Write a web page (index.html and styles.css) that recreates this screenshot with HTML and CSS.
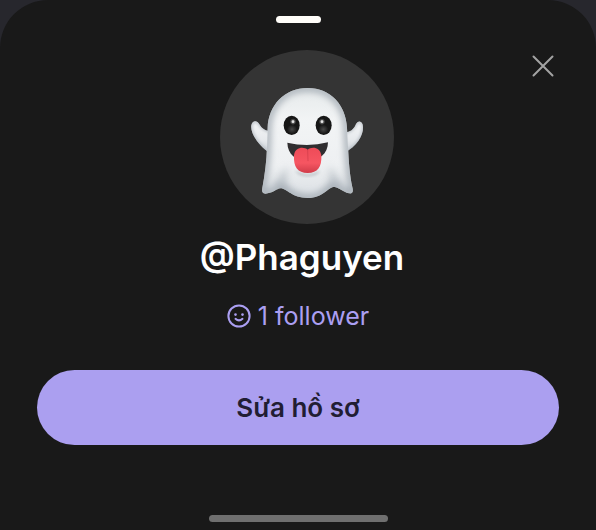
FILE: index.html
```html
<!DOCTYPE html>
<html lang="vi">
<head>
    <meta charset="UTF-8">
    <meta name="viewport" content="width=device-width, initial-scale=1">
    <title>Phaguyen</title>
    <link rel="stylesheet" href="styles.css">
</head>
<body>
    <main class="sheet">
        <div class="handle"></div>
        <button class="close" type="button" aria-label="Close">
            <svg viewBox="0 0 24 24" width="24" height="24">
                <path d="M2.5 2.5 21.5 21.5M21.5 2.5 2.5 21.5" />
            </svg>
        </button>

        <div class="avatar">
            <svg viewBox="15 15 522 522" role="img" aria-label="Ghost">
                <defs>
                    <linearGradient id="bodyFill" x1="0" y1="0" x2="0" y2="1">
                        <stop offset="0" stop-color="#e6eaeb" />
                        <stop offset="0.3" stop-color="#f2f4f5" />
                        <stop offset="0.7" stop-color="#eef0f2" />
                        <stop offset="1" stop-color="#dadfe3" />
                    </linearGradient>
                    <linearGradient id="armFill" x1="0" y1="0" x2="0" y2="1">
                        <stop offset="0" stop-color="#f5f6f7" />
                        <stop offset="0.6" stop-color="#e6e9ec" />
                        <stop offset="1" stop-color="#c9cfd5" />
                    </linearGradient>
                    <radialGradient id="eyeShine" cx="0.5" cy="0.5" r="0.5">
                        <stop offset="0" stop-color="#a5a5a5" />
                        <stop offset="1" stop-color="#161616" />
                    </radialGradient>
                    <linearGradient id="tongueFill" x1="0" y1="0" x2="0" y2="1">
                        <stop offset="0" stop-color="#ee4b58" />
                        <stop offset="0.6" stop-color="#f65662" />
                        <stop offset="1" stop-color="#d03c49" />
                    </linearGradient>
                    <filter id="soft" x="-30%" y="-30%" width="160%" height="160%">
                        <feGaussianBlur stdDeviation="11" />
                    </filter>
                    <filter id="softSmall" x="-30%" y="-30%" width="160%" height="160%">
                        <feGaussianBlur stdDeviation="4" />
                    </filter>
                    <path id="leftArm" d="M166 324C132 304 105 264 109 241C112 226 126 224 133 238C142 253 152 258 170 260Z" />
                    <path id="rightArm" d="M389 322C425 306 445 271 444 247C444 228 430 223 422 239C416 253 407 260 388 263Z" />
                    <path id="body" d="M278 129C208 129 160 181 158 249L156 305C155 348 149 391 142 429C139 444 146 448 158 445C176 442 184 432 196 430C213 428 230 459 278 459C326 459 339 425 358 426C371 427 384 441 402 445C414 447 415 439 412 427C404 391 401 348 399 305L396 249C393 181 348 129 278 129Z" />
                    <clipPath id="bodyClip"><use href="#body" /></clipPath>
                    <clipPath id="leftClip"><use href="#leftArm" /></clipPath>
                    <clipPath id="rightClip"><use href="#rightArm" /></clipPath>
                </defs>

                <!-- arms -->
                <use href="#leftArm" fill="url(#armFill)" />
                <use href="#rightArm" fill="url(#armFill)" />
                <g clip-path="url(#leftClip)">
                    <use href="#leftArm" fill="none" stroke="#adb5bd" stroke-width="6" filter="url(#softSmall)" />
                </g>
                <g clip-path="url(#rightClip)">
                    <use href="#rightArm" fill="none" stroke="#adb5bd" stroke-width="6" filter="url(#softSmall)" />
                </g>

                <!-- body -->
                <use href="#body" fill="url(#bodyFill)" />
                <g clip-path="url(#bodyClip)">
                    <use href="#body" fill="none" stroke="#a3abb3" stroke-width="20" filter="url(#soft)" />
                    <path d="M165 424Q198 395 216 362Q211 403 223 447L193 433Z" fill="#9ea7b0" opacity="0.5" filter="url(#soft)" />
                    <path d="M394 422Q360 397 344 360Q349 401 330 444L360 427Z" fill="#9ea7b0" opacity="0.5" filter="url(#soft)" />
                </g>

                <!-- eyes -->
                <ellipse cx="230" cy="241" rx="24" ry="29" fill="#161616" />
                <ellipse cx="326" cy="241" rx="24" ry="29" fill="#161616" />
                <ellipse cx="231" cy="253" rx="15" ry="14" fill="url(#eyeShine)" opacity="0.35" />
                <ellipse cx="325" cy="253" rx="15" ry="14" fill="url(#eyeShine)" opacity="0.35" />
                <circle cx="234" cy="230" r="10" fill="url(#eyeShine)" />
                <circle cx="321" cy="230" r="10" fill="url(#eyeShine)" />
                <circle cx="234" cy="230" r="4" fill="#e4e4e4" />
                <circle cx="321" cy="230" r="4" fill="#e4e4e4" />

                <!-- mouth -->
                <path d="M217 293Q278 307 339 292C339 326 312 348 278 348C243 348 218 328 217 293Z" fill="#302e30" />
                <path d="M240 376Q278 402 316 376Q306 393 278 393Q250 393 240 376Z" fill="#858d95" opacity="0.7" filter="url(#softSmall)" />
                <path d="M237 331C240 306 266 304 278 314C291 304 315 306 319 331C321 366 308 384 278 384C248 384 235 366 237 331Z" fill="url(#tongueFill)" />
                <path d="M278 316L279 347" fill="none" stroke="#c93946" stroke-width="3" stroke-linecap="round" opacity="0.6" />
            </svg>
        </div>

        <h1 class="username">@Phaguyen</h1>

        <a class="followers" href="#followers">
            <svg viewBox="0 0 24 24" width="24" height="24">
                <circle class="face" cx="12" cy="12" r="10.6" />
                <circle class="eye" cx="8.5" cy="10.6" r="1.3" />
                <circle class="eye" cx="15.5" cy="10.6" r="1.3" />
                <path class="smile" d="M8.5 14.8Q12 18 15.5 14.8" />
            </svg>
            <span>1 follower</span>
        </a>

        <button class="edit-profile" type="button">Sửa hồ sơ</button>

        <div class="home-bar"></div>
    </main>
</body>
</html>
```
FILE: styles.css
```css
* {
    box-sizing: border-box;
}

body {
    margin: 0;
    background-color: #27272d;
    color: #fff;
    font-family: Inter, "Liberation Sans", sans-serif;
}

.sheet {
    position: relative;
    display: flex;
    flex-direction: column;
    align-items: center;
    min-height: 100vh;
    padding: 16px 37px 8px;
    background-color: #191919;
    border-radius: 48px 48px 0 0;
}

.handle {
    width: 45px;
    height: 7px;
    border-radius: 4px;
    background-color: #fffdf9;
}

/* Close button sits over the sheet corner */
.close {
    position: absolute;
    top: 54px;
    right: 41px;
    padding: 0;
    border: none;
    background: none;
    cursor: pointer;
}

.close svg {
    display: block;
    fill: none;
    stroke: #a3a3a3;
    stroke-width: 2;
    stroke-linecap: round;
}

.avatar {
    width: 174px;
    height: 174px;
    margin-top: 27px;
    margin-left: 18px;
    border-radius: 50%;
    background-color: #343434;
}

.avatar svg {
    display: block;
    width: 100%;
}

.username {
    margin: 11px 0 0 8px;
    font-size: 35px;
    line-height: 44px;
    font-weight: 600;
}

.followers {
    display: flex;
    align-items: center;
    gap: 7px;
    margin-top: 21px;
    color: #ab9ff2;
    font-size: 25px;
    line-height: 32px;
    text-decoration: none;
}

.followers svg {
    fill: none;
    stroke: currentColor;
    stroke-width: 2;
    stroke-linecap: round;
}

.followers .eye {
    fill: currentColor;
    stroke: none;
}

.edit-profile {
    width: 100%;
    height: 75px;
    margin-top: 38px;
    border: none;
    border-radius: 38px;
    background-color: #ab9ff0;
    color: #211d33;
    font-family: inherit;
    font-size: 26px;
    font-weight: 600;
    cursor: pointer;
}

.home-bar {
    width: 179px;
    height: 7px;
    margin-top: auto;
    border-radius: 4px;
    background-color: #6f6f6f;
}
```
